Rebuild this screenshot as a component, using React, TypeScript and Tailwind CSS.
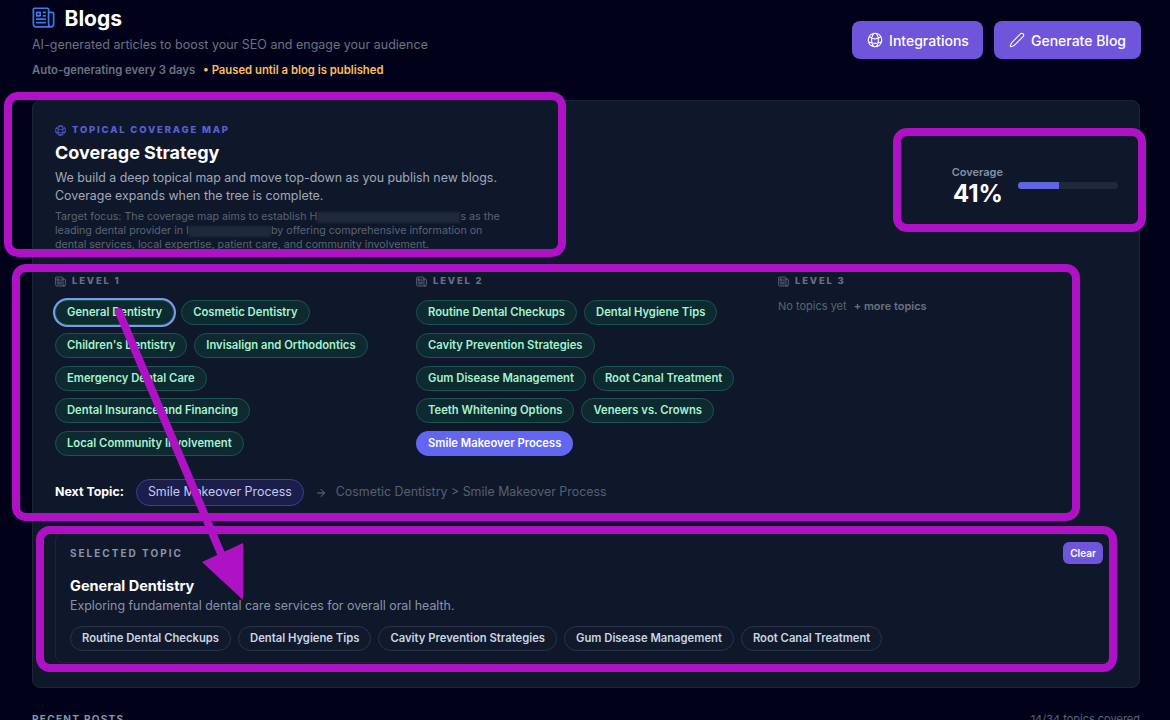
import { HiOutlineNewspaper, HiOutlineGlobeAlt } from "react-icons/hi2";
import { ArrowRight, Pen } from "lucide-react";

function Chip({ label, selected, active }: { label: string; selected?: boolean; active?: boolean }) {
  if (active) {
    return (
      <span className="inline-flex h-[25px] items-center rounded-full bg-[#6366f1] px-3 text-[11.25px] font-semibold text-white">
        {label}
      </span>
    );
  }
  return (
    <span
      className={
        selected
          ? "inline-flex h-[25px] items-center rounded-full border border-[#134e4a] bg-[#0c2a2f] px-[11px] text-[11.25px] font-semibold text-[#a7f3d0] ring-2 ring-[#7a9be8]"
          : "inline-flex h-[25px] items-center rounded-full border border-[#1b5450] bg-[#0c2a2f] px-[11px] text-[11.25px] font-semibold text-[#a7f3d0]"
      }
    >
      {label}
    </span>
  );
}

function LevelHeader({ n }: { n: number }) {
  return (
    <div className="flex h-[14px] items-center gap-[5px] text-[9.5px] font-extrabold tracking-[0.19em] text-[#667085]">
      <HiOutlineNewspaper className="-ml-[1px] h-[13px] w-[13px]" />
      <span>LEVEL {n}</span>
    </div>
  );
}

function Blur({ w }: { w: string }) {
  return <span className={`inline-block h-[11px] align-middle bg-[#1d2a3c] blur-[1px] ${w}`} />;
}

const level1 = [
  "General Dentistry",
  "Cosmetic Dentistry",
  "Children's Dentistry",
  "Invisalign and Orthodontics",
  "Emergency Dental Care",
  "Dental Insurance and Financing",
  "Local Community Involvement",
];
const level2 = [
  "Routine Dental Checkups",
  "Dental Hygiene Tips",
  "Cavity Prevention Strategies",
  "Gum Disease Management",
  "Root Canal Treatment",
  "Teeth Whitening Options",
  "Veneers vs. Crowns",
];
const related = [
  "Routine Dental Checkups",
  "Dental Hygiene Tips",
  "Cavity Prevention Strategies",
  "Gum Disease Management",
  "Root Canal Treatment",
];

const ring = "absolute border-[8px] border-[#ae12c4] rounded-[14px] pointer-events-none";

export default function App() {
  return (
    <div className="relative h-[720px] w-[1170px] overflow-hidden bg-[#01021a] pl-8 pr-[30px] font-['Inter','Liberation_Sans',sans-serif]">
      <header className="flex h-[100px] items-start justify-between">
        <div>
          <div className="mt-[6px] flex h-[26px] items-center gap-[8px]">
            <HiOutlineNewspaper className="-ml-[2.5px] -mt-[3px] h-[27px] w-[27px] text-[#3b7be8]" />
            <h1 className="text-[21px] font-bold text-white">Blogs</h1>
          </div>
          <p className="mt-[4px] text-[12.5px] leading-[18px] text-[#6b7280]">
            AI-generated articles to boost your SEO and engage your audience
          </p>
          <p className="mt-[8px] flex items-center text-[11.3px] font-semibold leading-[16px] text-[#6b7280]">
            <span>Auto-generating every 3 days</span>
            <span className="ml-2 text-[#fbbf5e]">• Paused until a blog is published</span>
          </p>
        </div>
        <div className="-mr-[1px] mt-[21px] flex gap-[11px]">
          <button className="flex h-[38px] w-[131px] items-center justify-center gap-[5px] rounded-lg bg-[#6f55d9] text-[14px] font-medium text-white">
            <HiOutlineGlobeAlt className="h-[18px] w-[18px]" />
            Integrations
          </button>
          <button className="flex h-[38px] w-[147px] items-center justify-center gap-[6px] rounded-lg bg-[#6f55d9] text-[14px] font-medium text-white">
            <Pen className="h-[16px] w-[16px]" strokeWidth={1.6} />
            Generate Blog
          </button>
        </div>
      </header>

      <section className="h-[588px] rounded-lg border border-[#1e2636] bg-[#0f172a] pl-[22px] pr-[21px] pt-[23px]">
        <div className="flex items-start justify-between">
          <div className="w-[450px]">
            <div className="flex h-[12px] items-center gap-[5px] text-[9.5px] font-extrabold tracking-[0.19em] text-[#5a60d8]">
              <HiOutlineGlobeAlt className="-ml-[1px] h-[13px] w-[13px]" />
              TOPICAL COVERAGE MAP
            </div>
            <h2 className="mt-[5px] text-[18px] font-bold leading-[24px] text-white">Coverage Strategy</h2>
            <p className="mt-[4px] text-[12.4px] leading-[18px] text-[#a1a9b8]">
              We build a deep topical map and move top-down as you publish new blogs. Coverage expands when the tree is
              complete.
            </p>
            <p className="mt-[5px] text-[10.7px] leading-[14px] text-[#5b6475]">
              Target focus: The coverage map aims to establish H
              <Blur w="w-[143px]" />s as the leading dental provider in I
              <Blur w="w-[82px]" />
              by offering comprehensive information on dental services, local expertise, patient care, and community
              involvement.
            </p>
          </div>
          <div className="mt-[41px] flex items-center gap-[15px]">
            <div className="text-right">
              <div className="text-[11px] font-semibold leading-[14px] text-[#8491a5]">Coverage</div>
              <div className="text-[24px] font-bold leading-[30px] text-white">41%</div>
            </div>
            <div className="mb-[3px] h-[7px] w-[100px] overflow-hidden rounded-full bg-[#1e293b]">
              <div className="h-full bg-[#5f66e0]" style={{ width: "41%" }} />
            </div>
          </div>
        </div>

        <div className="mt-[22px] grid grid-cols-[361px_362px_1fr]">
          <div>
            <LevelHeader n={1} />
            <div className="mt-[12px] flex w-[340px] flex-wrap gap-x-[7px] gap-y-[7.75px]">
              {level1.map((t, i) => (
                <Chip key={t} label={t} selected={i === 0} />
              ))}
            </div>
          </div>
          <div>
            <LevelHeader n={2} />
            <div className="mt-[12px] flex w-[340px] flex-wrap gap-x-[7px] gap-y-[7.75px]">
              {level2.map((t) => (
                <Chip key={t} label={t} />
              ))}
              <Chip label="Smile Makeover Process" active />
            </div>
          </div>
          <div>
            <LevelHeader n={3} />
            <p className="mt-[11px] text-[11px] leading-[14px] text-[#5b6475]">
              No topics yet <span className="ml-1 font-semibold text-[#6b7280]">+ more topics</span>
            </p>
          </div>
        </div>

        <div className="mt-[23px] flex h-[27px] items-center text-[12.4px]">
          <span className="font-bold text-white">Next Topic:</span>
          <span className="ml-[12px] flex h-[27px] items-center rounded-full border border-[#3f3d9c] bg-[#1b1e4b] px-[11px] text-[#c7cbf5]">
            Smile Makeover Process
          </span>
          <ArrowRight className="ml-[11px] h-[12px] w-[12px] text-[#6b7280]" />
          <span className="ml-[9px] text-[#566072]">Cosmetic Dentistry &gt; Smile Makeover Process</span>
        </div>

        <div className="relative mt-[26px] h-[131px] w-[1062px] rounded-lg border border-[#1d2535] bg-[#0f172a] pl-[14px] pt-[13px]">
          <div className="text-[10px] font-bold leading-[14px] tracking-[0.2em] text-[#8a94a8]">SELECTED TOPIC</div>
          <button className="absolute right-[13px] top-[9px] flex h-[22px] w-[40px] items-center justify-center rounded-md bg-[#6f55d9] text-[10px] font-semibold text-white">
            Clear
          </button>
          <h3 className="mt-[16px] text-[14.5px] font-bold leading-[20px] text-white">General Dentistry</h3>
          <p className="mt-[1px] text-[12.4px] leading-[18px] text-[#8a94a8]">
            Exploring fundamental dental care services for overall oral health.
          </p>
          <div className="mt-[11px] flex gap-[7px]">
            {related.map((t) => (
              <span
                key={t}
                className="inline-flex h-[25px] items-center rounded-full border border-[#2b3446] bg-[#111a2c] px-[11px] text-[11.25px] font-semibold text-[#cbd5e1]"
              >
                {t}
              </span>
            ))}
          </div>
        </div>
      </section>

      <div className="mt-[23px] flex items-center justify-between">
        <span className="text-[10px] font-bold tracking-[0.13em] text-[#8a94a8]">RECENT POSTS</span>
        <span className="text-[11px] text-[#5b6475]">14/34 topics covered</span>
      </div>

      {/* annotation overlay */}
      <div className={`${ring} left-[4px] top-[92px] h-[165px] w-[562px]`} />
      <div className={`${ring} left-[893px] top-[128px] h-[104px] w-[253px]`} />
      <div className={`${ring} left-[12px] top-[264px] h-[257px] w-[1068px]`} />
      <div className={`${ring} left-[36px] top-[526px] h-[146px] w-[1081px]`} />
      <svg className="pointer-events-none absolute left-0 top-0" width="1170" height="720" viewBox="0 0 1170 720">
        <line x1="119" y1="312" x2="222" y2="556" stroke="#ae12c4" strokeWidth="8" strokeLinecap="round" />
        <polygon points="243,543 202,562 243,600" fill="#ae12c4" />
      </svg>
    </div>
  );
}
